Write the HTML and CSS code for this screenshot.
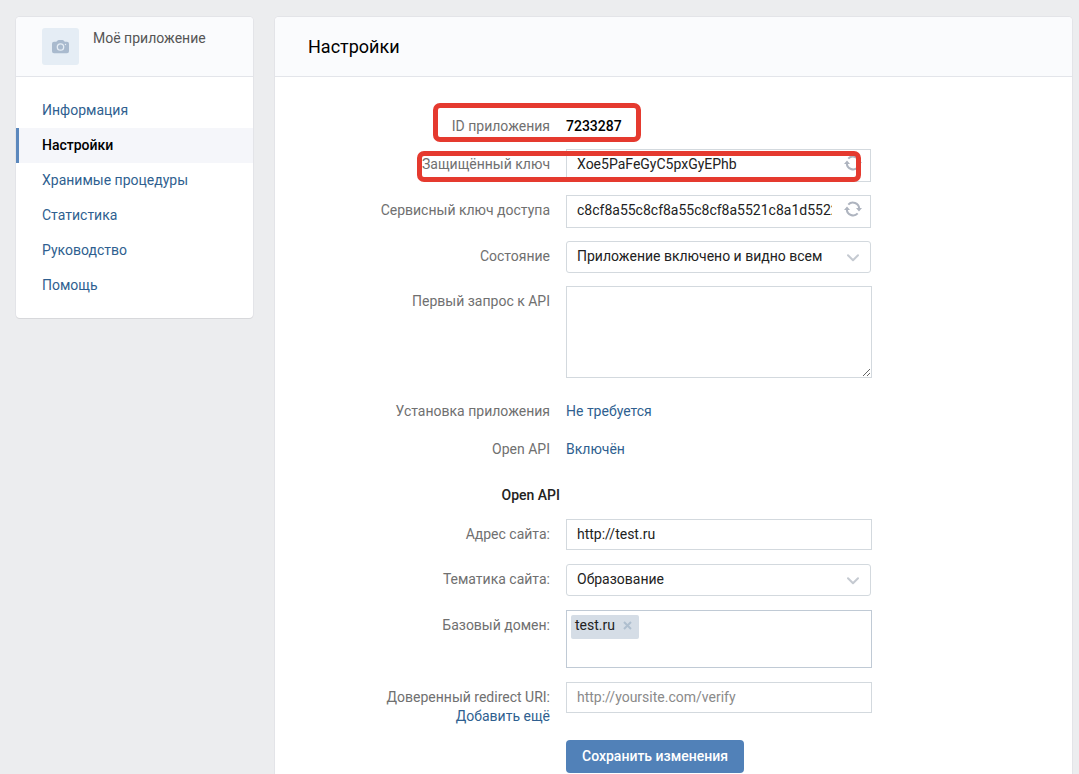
FILE: index.html
```html
<!DOCTYPE html>
<html lang="ru">
<head>
<meta charset="utf-8">
<meta name="viewport" content="width=device-width, initial-scale=1">
<title>Настройки</title>
<link rel="stylesheet" href="styles.css">
</head>
<body>
<svg class="sprite" aria-hidden="true">
  <symbol id="refresh" viewBox="0 0 18 16">
    <path d="M4.300 3.600 A6.300 6.300 0 0 1 15.200 7.600 M13.700 12.400 A6.300 6.300 0 0 1 2.800 8.400" fill="none" stroke="currentColor" stroke-width="2"/>
    <path d="M12 7h6l-3 3.600zM0 9h6L3 5.400z" fill="currentColor"/>
  </symbol>
  <symbol id="chevron" viewBox="0 0 12 8">
    <path d="M1 1.200l5 5 5-5" fill="none" stroke="currentColor" stroke-width="2" stroke-linecap="round" stroke-linejoin="round"/>
  </symbol>
</svg>
<div class="page">
  <aside class="card sidebar">
    <div class="card-head app">
      <span class="app-icon">
        <svg width="17" height="14" viewBox="0 0 17 14" aria-hidden="true">
          <path fill="#a9bace" d="M2 1.800h2.300L5.600.4Q6 0 6.600 0h4q.6 0 1 .4l1.200 1.400H15q2 0 2 2v7.400q0 2-2 2H2q-2 0-2-2V3.800q0-2 2-2z"/>
          <circle cx="8.500" cy="7" r="3.200" fill="none" stroke="#e5edf5" stroke-width="1.300"/>
          <circle cx="13.500" cy="4.500" r=".7" fill="#e5edf5"/>
        </svg>
      </span>
      <span class="app-name">Моё приложение</span>
    </div>
    <nav class="menu">
      <a href="#">Информация</a>
      <a href="#" class="active" aria-current="page">Настройки</a>
      <a href="#">Хранимые процедуры</a>
      <a href="#">Статистика</a>
      <a href="#">Руководство</a>
      <a href="#">Помощь</a>
    </nav>
  </aside>
  <main class="card content">
    <header class="card-head"><h1>Настройки</h1></header>
    <form class="form">
      <section class="rows">
        <div class="row">
          <span class="label">ID приложения</span>
          <span class="value id">7233287</span>
          <span class="mark mark-id"></span>
        </div>
        <div class="row">
          <label class="label" for="secret">Защищённый ключ</label>
          <div class="field short">
            <input class="control key" id="secret" type="text" value="Xoe5PaFeGyC5pxGyEPhb">
            <button class="refresh" type="button" aria-label="Обновить"><svg width="18" height="16"><use href="#refresh"/></svg></button>
          </div>
          <span class="mark mark-key"></span>
        </div>
        <div class="row">
          <label class="label" for="service">Сервисный ключ доступа</label>
          <div class="field short">
            <input class="control key" id="service" type="text" value="c8cf8a55c8cf8a55c8cf8a5521c8a1d5522c8cf8">
            <button class="refresh" type="button" aria-label="Обновить"><svg width="18" height="16"><use href="#refresh"/></svg></button>
          </div>
        </div>
        <div class="row">
          <label class="label" for="state">Состояние</label>
          <div class="field short">
            <select class="control" id="state"><option>Приложение включено и видно всем</option></select>
            <svg class="chevron" width="12" height="8"><use href="#chevron"/></svg>
          </div>
        </div>
        <div class="row">
          <label class="label" for="request">Первый запрос к API</label>
          <textarea class="control" id="request"></textarea>
        </div>
        <div class="row spaced">
          <span class="label">Установка приложения</span>
          <a class="value" href="#">Не требуется</a>
        </div>
        <div class="row">
          <span class="label">Open API</span>
          <a class="value" href="#">Включён</a>
        </div>
      </section>
      <section class="rows site">
        <div class="row"><h2>Open API</h2></div>
        <div class="row">
          <label class="label" for="url">Адрес сайта:</label>
          <input class="control" id="url" type="text" value="http://test.ru">
        </div>
        <div class="row">
          <label class="label" for="topic">Тематика сайта:</label>
          <div class="field short">
            <select class="control" id="topic"><option>Образование</option></select>
            <svg class="chevron" width="12" height="8"><use href="#chevron"/></svg>
          </div>
        </div>
        <div class="row">
          <label class="label" for="domain">Базовый домен:</label>
          <div class="tags">
            <span class="tag">test.ru<button type="button" aria-label="Удалить"><svg width="9" height="9" viewBox="0 0 9 9"><path d="M1 1l7 7M8 1L1 8" stroke="#afbfcf" stroke-width="2"/></svg></button></span>
            <input id="domain" type="text">
          </div>
        </div>
        <div class="row">
          <div class="label"><label for="redirect">Доверенный redirect URI:</label><br><a href="#">Добавить ещё</a></div>
          <input class="control" id="redirect" type="text" placeholder="http://yoursite.com/verify">
        </div>
        <div class="row"><button class="save" type="submit">Сохранить изменения</button></div>
      </section>
    </form>
  </main>
</div>
</body>
</html>
```
FILE: styles.css
```css
* { box-sizing: border-box; }
body {
  margin: 0;
  background: #ecedef;
  color: #222;
  font: 14px/19px Roboto, "Open Sans", sans-serif;
}
input, select, textarea, button { font: inherit; color: inherit; }
a { color: #2f5f90; text-decoration: none; }
.sprite { display: none; }
.page {
  display: flex;
  align-items: flex-start;
  gap: 22px;
  min-height: 100vh;
  padding: 17px 7px 0 16px;
}
.card {
  background: #fff;
  border-radius: 4px;
  box-shadow: 0 1px 0 0 #d7d8db, 0 0 0 1px #e3e4e8;
}
.card-head {
  height: 60px;
  border-bottom: 1px solid #e3e5ea;
  border-radius: 4px 4px 0 0;
  background: #fafbfd;
}
.sidebar { flex: 0 0 237px; }
.app { display: flex; gap: 14px; padding: 11px 26px; }
.app-icon {
  display: flex;
  align-items: center;
  justify-content: center;
  width: 37px;
  height: 37px;
  border-radius: 3px;
  background: #e5edf5;
}
.app-name { padding-top: 1px; color: #555; }
.menu { padding: 16px 0 15px; }
.menu a {
  display: block;
  padding: 8px 23px;
  border-left: 3px solid transparent;
}
.menu .active {
  border-color: #5b88bd;
  background: #f5f6fa;
  color: #000;
  font-weight: 500;
}
.content {
  flex: 1;
  min-width: 0;
  align-self: stretch;
  border-radius: 4px 4px 0 0;
}
.content .card-head { padding: 18px 33px; }
h1 { margin: 0; color: #000; font-size: 18px; line-height: 24px; font-weight: 400; }
h2 { grid-column: 1; margin: 0 -10px 0 0; font-size: 14px; font-weight: 500; text-align: right; }

.form { padding-top: 34px; }
.rows { display: grid; gap: 13px; }
.site { gap: 14px; margin-top: 25px; }
.site h2 { padding-top: 2px; }
.row {
  position: relative;
  display: grid;
  grid-template-columns: 275px minmax(0, 306px);
  column-gap: 16px;
  align-items: start;
}
.spaced { margin-top: 5px; }
.label, .value { padding-top: 6px; }
.label { color: #707070; text-align: right; }
.id { color: #000; font-weight: 500; }
.field { position: relative; }
.short { margin-right: 1px; }
.control {
  display: block;
  width: 100%;
  height: 31px;
  padding: 0 10px 2px;
  border: 1px solid #d3d9de;
  border-radius: 0;
  background: #fff;
  outline: 0;
}
.control::placeholder { color: #8a8a8a; opacity: 1; }
.key { height: 33px; padding: 0 38px 4px 10px; }
textarea.control { height: 92px; resize: vertical; }
select.control {
  height: 32px;
  border-radius: 3px;
  appearance: none;
}
.refresh {
  position: absolute;
  top: 6px;
  right: 9px;
  display: flex;
  padding: 0;
  border: 0;
  background: none;
  color: #aeb4bf;
}
.chevron {
  position: absolute;
  top: 13px;
  right: 12px;
  color: #c5cad1;
  pointer-events: none;
}
.tags {
  display: flex;
  align-items: flex-start;
  min-height: 58px;
  padding: 4px;
  border: 1px solid #c0cad5;
}
.tags input { flex: 1; min-width: 0; border: 0; outline: 0; background: none; }
.tag {
  display: flex;
  align-items: center;
  gap: 8px;
  height: 24px;
  padding: 0 7px 3px 4px;
  border-radius: 2px;
  background: #d5dde6;
}
.tag button { display: flex; padding: 0; border: 0; background: none; }
.save {
  grid-column: 2;
  justify-self: start;
  height: 33px;
  padding: 0 16px;
  border: 0;
  border-radius: 4px;
  background: #5181b8;
  color: #fff;
  font-weight: 500;
}

/* Highlight frames drawn over the form */
.mark {
  position: absolute;
  border: 5px solid #e53a2f;
  border-radius: 7px;
  pointer-events: none;
}
.mark-id { top: -8px; left: 158px; width: 208px; height: 39px; }
.mark-key { top: 2px; left: 142px; width: 444px; height: 31px; }
```
